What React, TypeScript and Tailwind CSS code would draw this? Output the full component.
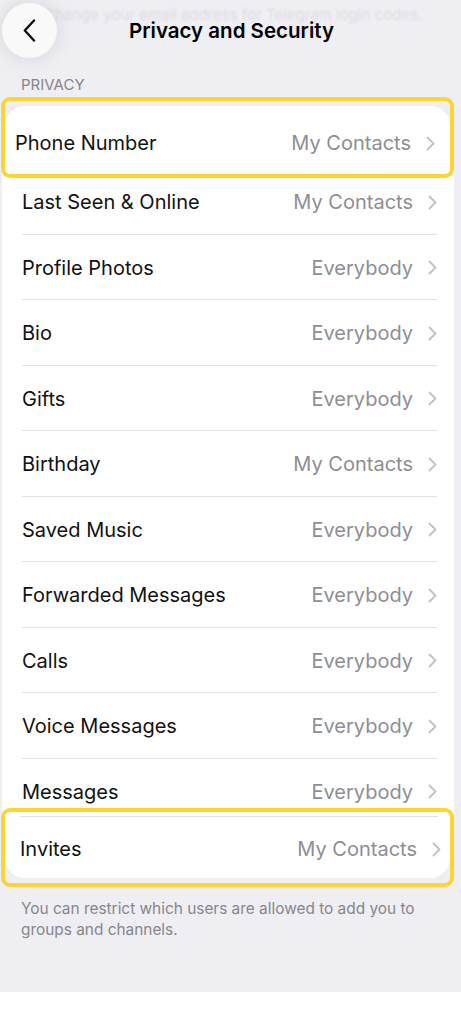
const rows = [
  { label: 'Phone Number', value: 'My Contacts', h: 'h-[59px]', highlighted: true },
  { label: 'Last Seen & Online', value: 'My Contacts', h: 'h-[66px]' },
  { label: 'Profile Photos', value: 'Everybody', h: 'h-[65px]' },
  { label: 'Bio', value: 'Everybody', h: 'h-[66px]' },
  { label: 'Gifts', value: 'Everybody', h: 'h-[65px]' },
  { label: 'Birthday', value: 'My Contacts', h: 'h-[66px]' },
  { label: 'Saved Music', value: 'Everybody', h: 'h-[65px]' },
  { label: 'Forwarded Messages', value: 'Everybody', h: 'h-[66px]' },
  { label: 'Calls', value: 'Everybody', h: 'h-[65px]' },
  { label: 'Voice Messages', value: 'Everybody', h: 'h-[66px]' },
  { label: 'Messages', value: 'Everybody', h: 'h-[65px]' },
  { label: 'Invites', value: 'My Contacts', h: 'h-[56px]', highlighted: true },
]

function Chevron() {
  return (
    <svg width="9" height="15" viewBox="0 0 9 15" fill="none" className="shrink-0">
      <path d="M1.5 1.5L7.5 7.5L1.5 13.5" stroke="#c4c4c8" strokeWidth="2" strokeLinecap="round" strokeLinejoin="round" />
    </svg>
  )
}

function Row({ label, value, h, last, highlighted }: { label: string; value: string; h: string; last: boolean; highlighted?: boolean }) {
  // highlighted rows are drawn by the yellow overlays on top
  if (highlighted) return <div className={h} />
  return (
    <div className={`relative flex items-center pl-[20px] pr-[17px] ${h}`}>
      <span className="flex-1 text-[20px] text-[#111]">{label}</span>
      <span className="mr-[15px] text-[20px] text-[#8e8e93]">{value}</span>
      <Chevron />
      {!last && <div className="absolute bottom-0 left-[20px] right-[17px] h-px bg-[#e2e2e5]" />}
    </div>
  )
}

export default function App() {
  return (
    <div className="relative h-[1024px] w-[461px] overflow-hidden bg-white font-['Inter',sans-serif]">
      <div className="h-[992px] bg-[#efeef3]">
        {/* header */}
        <div className="relative flex h-[60px] items-center justify-center">
          <p className="absolute left-[44px] top-[4px] whitespace-nowrap text-[15px] text-[#dcdce1] blur-[1.2px]">
            Change your email address for Telegram login codes.
          </p>
          <button className="absolute left-[2px] top-[3px] flex h-[55px] w-[55px] items-center justify-center rounded-full bg-[#f9f9fa] shadow-[0_0_22px_rgba(0,0,0,0.11)]">
            <svg width="13" height="23" viewBox="0 0 13 23" fill="none">
              <path d="M11 1.5L1.8 11.5L11 21.5" stroke="#111" strokeWidth="2.4" strokeLinecap="round" strokeLinejoin="round" />
            </svg>
          </button>
          <h1 className="relative top-[1px] ml-[2px] text-[20.5px] font-semibold text-black">Privacy and Security</h1>
        </div>

        <div className="pt-[15px] pb-[15px] pl-[21px] text-[15px] leading-[20px] text-[#85858a]">PRIVACY</div>

        <div className="ml-[2px] w-[452px] overflow-hidden rounded-[20px] bg-white">
          {rows.map((r, i) => (
            <Row key={r.label} {...r} last={i === rows.length - 1} />
          ))}
        </div>

        <p className="px-[21px] pt-[18px] text-[15.4px] leading-[21px] text-[#86868b]">
          You can restrict which users are allowed to add you to groups and channels.
        </p>
      </div>

      {/* highlight: phone number */}
      <div className="absolute left-[1px] top-[97px] flex h-[81px] w-[453px] flex-col overflow-hidden rounded-[9px] border-[4px] border-[#fcd535] bg-[#efeef3]">
        <div className="mt-[5px] flex flex-1 items-center rounded-t-[20px] bg-white pt-[6px] pl-[10px] pr-[15px]">
          <span className="flex-1 text-[20px] text-[#111]">Phone Number</span>
          <span className="mr-[15px] text-[20px] text-[#8e8e93]">My Contacts</span>
          <Chevron />
        </div>
      </div>

      {/* highlight: invites */}
      <div className="absolute left-[1px] top-[808px] flex h-[79px] w-[453px] flex-col overflow-hidden rounded-[9px] border-[4px] border-[#fcd535] bg-[#efeef3]">
        <div className="relative flex flex-1 items-center rounded-b-[20px] bg-white pl-[15px] pr-[9px] pt-[8px]">
          <div className="absolute left-[15px] right-[12px] top-[4px] h-px bg-[#e2e2e5]" />
          <span className="flex-1 text-[20px] text-[#111]">Invites</span>
          <span className="mr-[15px] text-[20px] text-[#8e8e93]">My Contacts</span>
          <Chevron />
        </div>
        <div className="h-[5px]" />
      </div>
    </div>
  )
}
